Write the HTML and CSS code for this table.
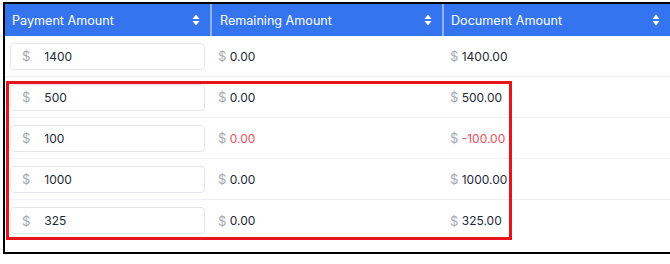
FILE: index.html
```html
<!DOCTYPE html>
<html>
<head>
<meta charset="utf-8">
<link rel="stylesheet" href="styles.css">
</head>
<body>
<div class="frame">
  <div class="table">
    <div class="head">
      <div class="th c1"><span>Payment Amount</span><svg class="sort" width="8" height="12" viewBox="0 0 8 12"><path d="M4 0.5L7.5 5H0.5Z M4 11.5L7.5 7H0.5Z" fill="#fff"/></svg></div>
      <div class="th c2"><span>Remaining Amount</span><svg class="sort" width="8" height="12" viewBox="0 0 8 12"><path d="M4 0.5L7.5 5H0.5Z M4 11.5L7.5 7H0.5Z" fill="#fff"/></svg></div>
      <div class="th c3"><span>Document Amount</span><svg class="sort" width="8" height="12" viewBox="0 0 8 12"><path d="M4 0.5L7.5 5H0.5Z M4 11.5L7.5 7H0.5Z" fill="#fff"/></svg></div>
    </div>
    <div class="row">
      <div class="td c1"><div class="input"><span class="cur">$</span><span class="val">1400</span></div></div>
      <div class="td c2"><span class="cur">$</span> 0.00</div>
      <div class="td c3"><span class="cur">$</span> 1400.00</div>
    </div>
    <div class="row">
      <div class="td c1"><div class="input"><span class="cur">$</span><span class="val">500</span></div></div>
      <div class="td c2"><span class="cur">$</span> 0.00</div>
      <div class="td c3"><span class="cur">$</span> 500.00</div>
    </div>
    <div class="row">
      <div class="td c1"><div class="input"><span class="cur">$</span><span class="val">100</span></div></div>
      <div class="td c2 neg"><span class="cur">$</span> 0.00</div>
      <div class="td c3 neg"><span class="cur">$</span> -100.00</div>
    </div>
    <div class="row">
      <div class="td c1"><div class="input"><span class="cur">$</span><span class="val">1000</span></div></div>
      <div class="td c2"><span class="cur">$</span> 0.00</div>
      <div class="td c3"><span class="cur">$</span> 1000.00</div>
    </div>
    <div class="row last">
      <div class="td c1"><div class="input"><span class="cur">$</span><span class="val">325</span></div></div>
      <div class="td c2"><span class="cur">$</span> 0.00</div>
      <div class="td c3"><span class="cur">$</span> 325.00</div>
    </div>
    <div class="highlight"></div>
  </div>
</div>
</body>
</html>
```
FILE: styles.css
```css
* { box-sizing: border-box; }
body {
  margin: 0;
  background: #fff;
  font-family: Inter, "Noto Sans", sans-serif;
  font-size: 12px;
  color: #1f2937;
}
.frame {
  margin: 2px 0 0 3px;
  height: 252px;
  border-top: 2px solid #000;
  border-left: 2px solid #000;
  border-bottom: 2px solid #000;
  overflow: hidden;
}
.table {
  position: relative;
  width: 700px;
}
.head {
  display: flex;
  height: 32px;
  background: #3474ee;
  color: #fff;
  font-size: 12.6px;
}
.th {
  display: flex;
  align-items: center;
  justify-content: space-between;
  padding: 0 10px 0 7px;
  border-right: 2px solid #8fb2f5;
}
.th .sort { flex: none; }
.c1 { width: 207px; flex: none; }
.c2 { width: 232px; flex: none; }
.c3 { width: 226px; flex: none; }
.th.c3 { border-right: none; }
.th.c2 { padding-left: 8px; }
.row {
  display: flex;
  height: 41px;
  border-bottom: 1px solid #eef0f3;
}
.row.last { border-bottom: none; }
.td {
  display: flex;
  align-items: center;
  padding-left: 6px;
  white-space: pre;
}
.td.c1 { padding-left: 5px; }
.td.c3 { padding-left: 6px; }
.cur { font-size: 13px; }
.input {
  width: 195px;
  height: 27px;
  border: 1px solid #e3e6eb;
  border-radius: 4px;
  display: flex;
  align-items: center;
  padding-left: 11px;
}
.input .val { margin-left: 14px; }
.cur { color: #a3a9b4; }
.neg { color: #ef4f59; }
.neg .cur { color: #a3a9b4; }
.highlight {
  position: absolute;
  left: 1px;
  top: 77px;
  width: 506px;
  height: 159px;
  border: 3px solid #e8141c;
  pointer-events: none;
}
```
